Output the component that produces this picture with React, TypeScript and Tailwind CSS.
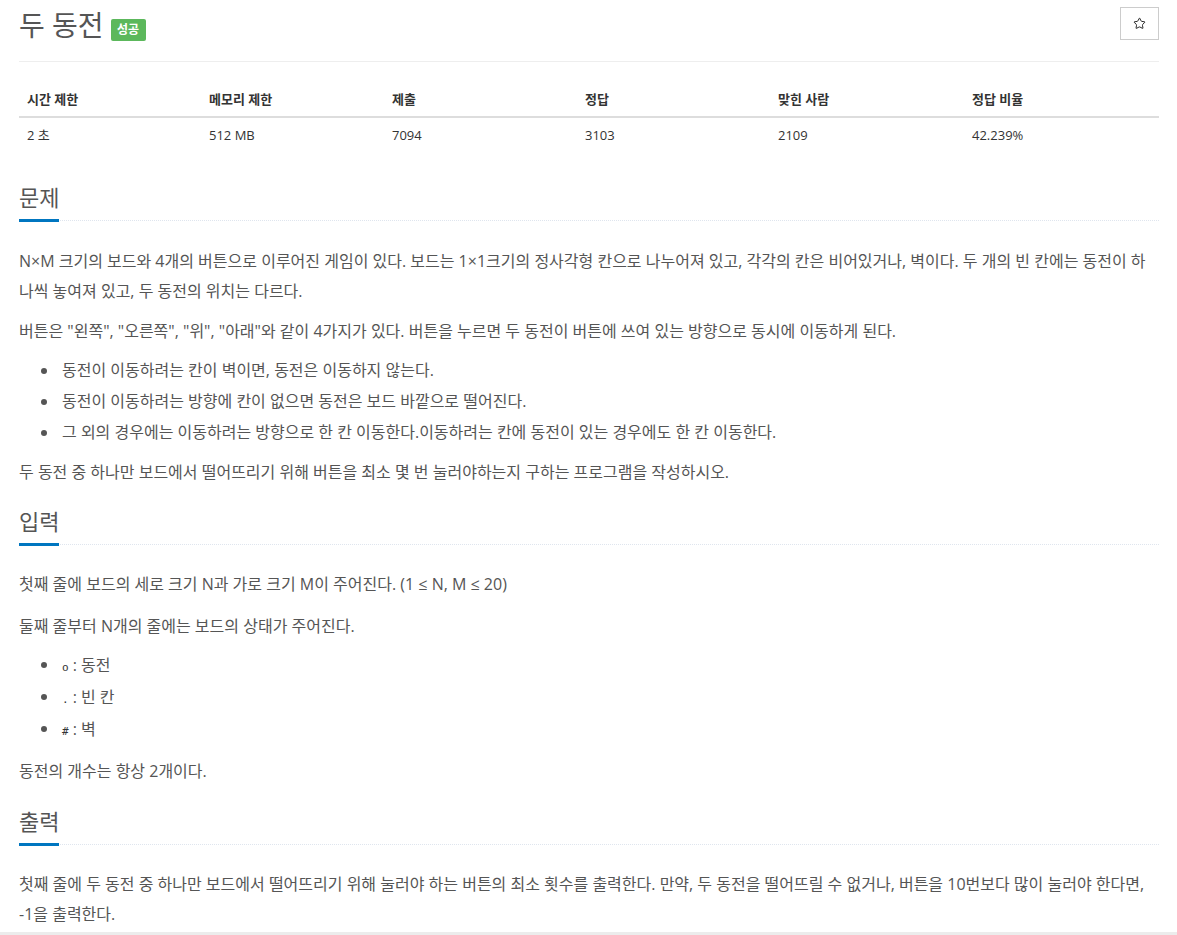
import React from "react";
import { Star } from "lucide-react";

const F = { fontFamily: "'Open Sans', 'Noto Sans CJK KR', sans-serif" };

function Heading({ children }: { children: React.ReactNode }) {
  return (
    <div className="border-b border-dotted border-[#dfe5ee] leading-none">
      <span className="inline-block text-[22px] leading-[28px] text-[#555] pb-[8px] border-b-[3px] border-[#0076c0] -mb-[2px]">
        {children}
      </span>
    </div>
  );
}

function P({ children, className = "" }: { children: React.ReactNode; className?: string }) {
  return <p className={`text-[16px] leading-[30px] text-[#555] ${className}`}>{children}</p>;
}

function Li({ children }: { children: React.ReactNode }) {
  return (
    <li className="flex items-center">
      <span className="w-[6px] h-[6px] rounded-full bg-[#555] ml-[22px] mr-[15px] shrink-0" />
      <span>{children}</span>
    </li>
  );
}

function Code({ children }: { children: React.ReactNode }) {
  return (
    <code className="text-[11px] leading-none text-[#333] mr-[4px]" style={{ fontFamily: "'DejaVu Sans Mono', monospace" }}>
      {children}
    </code>
  );
}

export default function App() {
  const heads = ["시간 제한", "메모리 제한", "제출", "정답", "맞힌 사람", "정답 비율"];
  const vals = ["2 초", "512 MB", "7094", "3103", "2109", "42.239%"];
  const cols = "grid grid-cols-[182px_183px_193px_193px_194px_1fr]";
  return (
    <div className="bg-white min-h-[935px] pl-[19px] pr-[18px] pt-[7px]" style={F}>
      <div className="flex justify-between items-start">
        <div className="flex items-start">
          <h1 className="text-[28px] leading-[36px] text-[#555] font-normal">두 동전</h1>
          <span className="ml-[7px] mt-[12px] h-[22px] w-[35px] flex items-center justify-center bg-[#5cb85c] text-white text-[12px] font-bold rounded-[2px]">
            성공
          </span>
        </div>
        <button className="w-[39px] h-[33px] border border-[#ccc] bg-white flex items-center justify-center text-[#222]">
          <Star size={13} strokeWidth={1.8} />
        </button>
      </div>
      <div className="mt-[18px] h-px bg-[#eee]" />

      <div className="mt-[20px]">
        <div className={`${cols} border-b-2 border-[#ddd]`}>
          {heads.map((h) => (
            <div key={h} className="px-[8px] py-[8px] text-[13px] leading-[18px] font-bold text-[#333]">
              {h}
            </div>
          ))}
        </div>
        <div className={cols}>
          {vals.map((v) => (
            <div key={v} className="px-[8px] py-[8px] text-[13px] leading-[18px] text-[#333]">
              {v}
            </div>
          ))}
        </div>
      </div>

      <div className="mt-[31px]">
        <Heading>문제</Heading>
        <div className="mt-[25px]">
          <P>
            N×M 크기의 보드와 4개의 버튼으로 이루어진 게임이 있다. 보드는 1×1크기의 정사각형 칸으로 나누어져 있고, 각각의 칸은 비어있거나, 벽이다. 두 개의 빈 칸에는 동전이 하나씩 놓여져 있고, 두 동전의 위치는 다르다.
          </P>
          <P className="mt-[10px]">
            버튼은 "왼쪽", "오른쪽", "위", "아래"와 같이 4가지가 있다. 버튼을 누르면 두 동전이 버튼에 쓰여 있는 방향으로 동시에 이동하게 된다.
          </P>
          <ul className="my-[9px] text-[16px] leading-[31px] text-[#555]">
            <Li>동전이 이동하려는 칸이 벽이면, 동전은 이동하지 않는다.</Li>
            <Li>동전이 이동하려는 방향에 칸이 없으면 동전은 보드 바깥으로 떨어진다.</Li>
            <Li>그 외의 경우에는 이동하려는 방향으로 한 칸 이동한다.이동하려는 칸에 동전이 있는 경우에도 한 칸 이동한다.</Li>
          </ul>
          <P>두 동전 중 하나만 보드에서 떨어뜨리기 위해 버튼을 최소 몇 번 눌러야하는지 구하는 프로그램을 작성하시오.</P>
        </div>
      </div>

      <div className="mt-[20px]">
        <Heading>입력</Heading>
        <div className="mt-[24px]">
          <P>첫째 줄에 보드의 세로 크기 N과 가로 크기 M이 주어진다. (1 ≤ N, M ≤ 20)</P>
          <P className="mt-[12px]">둘째 줄부터 N개의 줄에는 보드의 상태가 주어진다.</P>
          <ul className="mt-[8px] mb-[11px] text-[16px] leading-[32px] text-[#555]">
            <Li>
              <Code>o</Code>: 동전
            </Li>
            <Li>
              <Code>.</Code>: 빈 칸
            </Li>
            <Li>
              <Code>#</Code>: 벽
            </Li>
          </ul>
          <P>동전의 개수는 항상 2개이다.</P>
        </div>
      </div>

      <div className="mt-[21px]">
        <Heading>출력</Heading>
        <div className="mt-[24px]">
          <P>
            첫째 줄에 두 동전 중 하나만 보드에서 떨어뜨리기 위해 눌러야 하는 버튼의 최소 횟수를 출력한다. 만약, 두 동전을 떨어뜨릴 수 없거나, 버튼을 10번보다 많이 눌러야 한다면, -1을 출력한다.
          </P>
        </div>
      </div>
      <div className="fixed left-0 right-0 bottom-0 h-[3px] bg-[#ececec]" />
    </div>
  );
}
